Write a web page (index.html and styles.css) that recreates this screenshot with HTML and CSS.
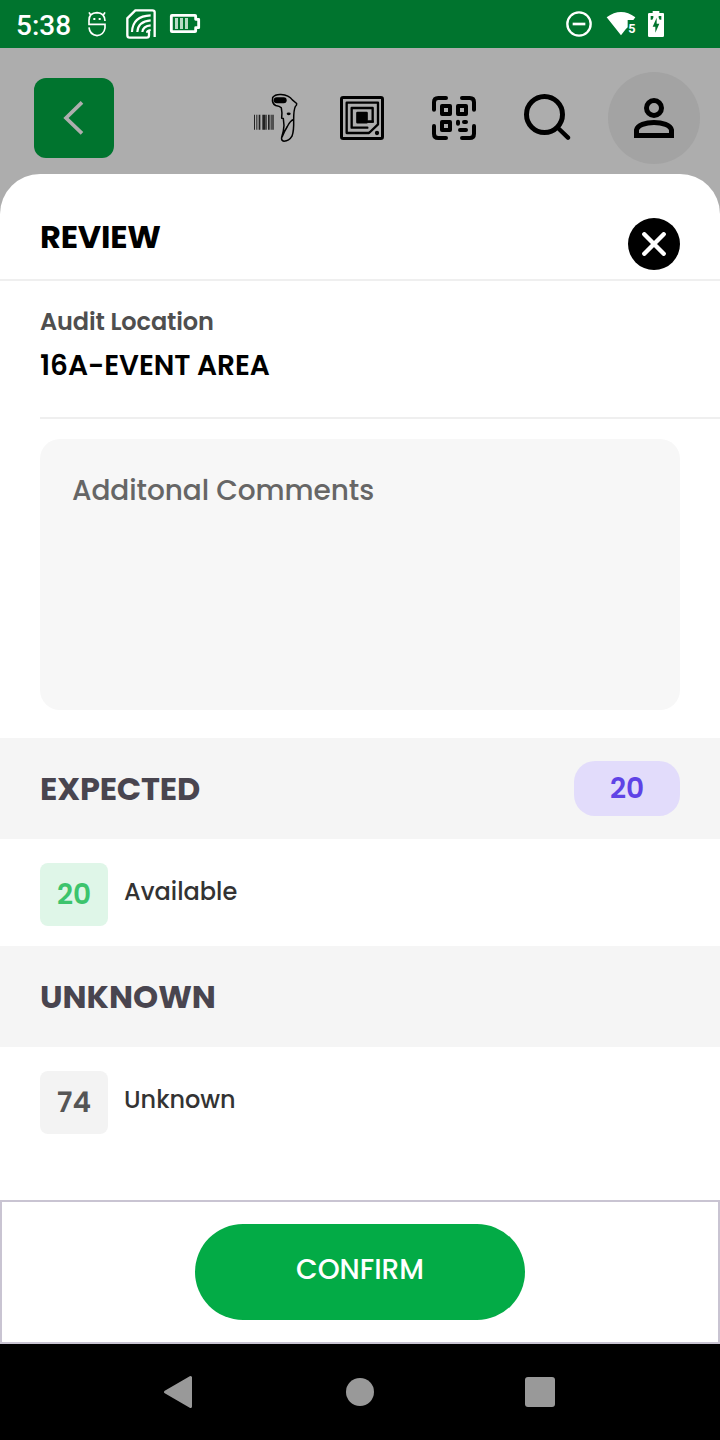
FILE: index.html
```html
<!DOCTYPE html>
<html lang="en">
<head>
<meta charset="utf-8">
<title>Review</title>
<link rel="stylesheet" href="styles.css">
</head>
<body>
<div class="screen">
  <div class="status">
    <span class="time">5:38</span>
    <svg class="st-face" viewBox="258 30 66 84" width="22" height="28" fill="none" stroke="#fff" stroke-width="5">
      <path d="M315 63Q314 39 291 38Q267 39 267 61V73H315V84Q312 104 291 107Q269 104 267 82M272 45L267 37M310 45L315 37"/>
      <path d="M280 57h6M296 57h6" stroke-width="6"/>
    </svg>
    <svg class="st-sim" viewBox="375 24 96 96" width="32" height="32" fill="none" stroke="#fff" stroke-width="7">
      <path d="M464 111V37Q464 31 457 31H406L382 55V106Q382 113 389 113H440Q447 113 447 106V90"/>
      <path d="M396 96Q398 48 452 46M412 96Q414 64 452 61M427 96Q429 78 452 76M441 98Q441 91 452 90" stroke-width="6.500"/>
    </svg>
    <svg class="st-batt" viewBox="507 39 96 63" width="32" height="21">
      <path d="M516 46H585Q587 46 587 48V58H596V83H587V93Q587 95 585 95H516Q514 95 514 93V48Q514 46 516 46Z" fill="none" stroke="#fff" stroke-width="8.500" stroke-linejoin="round"/>
      <path d="M525 54h9v33h-9zM540 54h9v33h-9zM555 54h9v33h-9z" fill="#b9dcc6"/>
    </svg>
    <span class="grow"></span>
    <svg class="st-dnd" viewBox="258 33 78 78" width="26" height="26" fill="none" stroke="#fff"><circle cx="297" cy="72" r="35" stroke-width="7"/><path d="M278 72H316" stroke-width="8"/></svg>
    <svg class="st-wifi" viewBox="378 33 93 75" width="31" height="25"><path d="M380 52Q423 20 466 52L460 60H443V82L437 88L423 106Z" fill="#fff"/><text x="445" y="99" class="wifi-num">5</text></svg>
    <svg class="st-chg" viewBox="504 30 48 84" width="16" height="28"><path d="M518 33H538V39H549Q552 39 552 42V107Q552 111 548 111H508Q504 111 504 107V42Q504 39 508 39H518Z" fill="#fff"/><path d="M530 53L518 80H526V98L538 71H530ZM512 48h8v5l-3 6h-5zM536 48h8v11h-5l-3-6z" fill="#00742e"/></svg>
  </div>

  <div class="toolbar">
    <div class="back"><svg viewBox="190 300 64 108" width="21.330" height="36"><path d="M247 307L199 354L247 400" fill="none" stroke="#aeaeae" stroke-width="11"/></svg></div>
    <span class="grow"></span>
    <svg class="ic-scan" viewBox="36 69.500 144 150" width="48" height="50">
      <path d="M42 135h3v45h-3zM48 135h2v45h-2zM53 135h2v45h-2zM57 135h4v45h-4zM66 135h2v45h-2zM69 135h8v45h-8zM79 135h2v45h-2zM84 135h5v45h-5zM92 135h3v45h-3zM97 135h2v45h-2zM100 135h2v45h-2z" fill="#222"/>
      <path d="M98 83Q105 73 123 74Q147 76 157 90L170 101Q171 106 166 110Q161 120 161 149Q162 184 156 199Q147 214 132 214Q123 213 125 202Q131 186 132 167L130 146L125 145Q127 128 124 114Q119 109 107 107Q95 101 98 83ZM161 149Q151 152 142 170Q132 186 126 202" fill="none" stroke="#000" stroke-width="4.500" stroke-linejoin="round"/>
      <rect x="101" y="82" width="39" height="18" rx="9"/><ellipse cx="146" cy="132" rx="6" ry="4"/>
    </svg>
    <svg class="ic-rfid" viewBox="300 78 132 132" width="44" height="44" fill="none" stroke="#000" stroke-width="7" stroke-linejoin="round" stroke-linecap="round">
      <rect x="304.500" y="82.500" width="123" height="123" rx="5" stroke-width="9"/>
      <path d="M386 189H320V98H414V163L387 189M382 173H335V114H398V155H386" />
      <rect x="352" y="129" width="28" height="28" fill="#000"/><path d="M380 155H398"/><circle cx="411" cy="189" r="3.500" fill="#000" stroke-width="6"/>
    </svg>
    <svg class="ic-qr" viewBox="576 78 132 132" width="44" height="44" fill="none" stroke="#000" stroke-width="12" stroke-linecap="round" stroke-linejoin="round">
      <path d="M582 119V97Q582 84 595 84H618M666 84H689Q702 84 702 97V119M702 168V191Q702 204 689 204H666M618 204H595Q582 204 582 191V168"/>
      <path d="M606 108h24v24h-24zM654 108h24v24h-24zM606 156h24v24h-24z"/>
      <path d="M654 155v6M672 156h6M660 180h18"/>
    </svg>
    <svg class="ic-search" viewBox="129 279 144 144" width="48" height="48" fill="none" stroke="#000" stroke-width="15"><circle cx="193.500" cy="343.500" r="54"/><path d="M234 384L264 413" stroke-linecap="round" stroke-width="13"/></svg>
    <div class="avatar"><svg viewBox="462 294 120 120" width="40" height="40" fill="none" stroke="#000" stroke-width="15"><circle cx="522" cy="324" r="22.500"/><path d="M469.500 406.500V390C475 360 569 360 574.500 390V406.500Z"/></svg></div>
  </div>

  <div class="sheet">
    <div class="head">
      <div class="title t-review">REVIEW</div>
      <div class="close"><svg viewBox="0 0 24 24" width="24" height="24"><path d="M2.300 2.300L21.700 21.700M21.700 2.300L2.300 21.700" stroke="#fff" stroke-width="4.400" stroke-linecap="round"/></svg></div>
    </div>
    <div class="location">
      <div class="label">Audit Location</div>
      <div class="value">16A-EVENT AREA</div>
    </div>
    <div class="comments">Additonal Comments</div>
    <div class="band"><div class="title t-expected">EXPECTED</div><div class="pill">20</div></div>
    <div class="row"><div class="badge ok">20</div><div class="name">Available</div></div>
    <div class="band"><div class="title">UNKNOWN</div></div>
    <div class="row"><div class="badge unk">74</div><div class="name">Unknown</div></div>
    <div class="footer"><div class="confirm">CONFIRM</div></div>
  </div>

  <div class="nav">
    <svg viewBox="0 0 30 34" width="30" height="34"><path d="M2.500 17L27.500 2.500V31.500Z" fill="#999" stroke="#999" stroke-width="3" stroke-linejoin="round"/></svg>
    <span class="home"></span>
    <span class="recent"></span>
  </div>
</div>
</body>
</html>
```
FILE: styles.css
```css
* { box-sizing: border-box; }
body { margin: 0; font-family: Poppins, Inter, sans-serif; }
.screen { width: 720px; height: 1440px; display: flex; flex-direction: column; background: #adadad; overflow: hidden; }
.grow { flex: 1; }
svg { display: block; flex: none; }

.status { height: 48px; flex: none; background: #00742e; display: flex; align-items: center; padding: 0 56px 0 16px; }
.time { font: 500 28px/48px Roboto, sans-serif; color: #fff; width: 70px; padding-top: 3px; white-space: nowrap; }
.st-sim { margin-left: 17px; }
.st-batt { margin-left: 12px; margin-top: -1px; }
.st-wifi { margin-left: 14px; margin-top: -1px; }
.st-chg { margin-left: 11px; }
.wifi-num { font: 700 38px Roboto, sans-serif; fill: #fff; }

.toolbar { height: 126px; flex: none; display: flex; align-items: center; padding: 14px 20px 0 34px; }
.back { width: 80px; height: 80px; border-radius: 12px; background: #00742e; display: flex; align-items: center; justify-content: center; }
.ic-rfid { margin-left: 40px; }
.ic-qr { margin-left: 48px; }
.ic-search { margin-left: 47px; margin-top: -2px; }
.avatar { width: 92px; height: 92px; margin-left: 37px; border-radius: 50%; background: #a3a3a3; display: flex; align-items: center; justify-content: center; }

.sheet { height: 1170px; flex: none; background: #fff; border-radius: 40px 40px 0 0; display: flex; flex-direction: column; }
.head { height: 107px; flex: none; display: flex; justify-content: space-between; padding: 44px 40px 0; border-bottom: 2px solid #efefef; }
.title { font-size: 32px; font-weight: 700; line-height: 40px; white-space: nowrap; color: #49454f; }
.t-review { color: #000; margin-top: -1px; letter-spacing: -0.2px; }
.t-expected { letter-spacing: -0.15px; }
.close { width: 52px; height: 52px; border-radius: 50%; background: #000; display: flex; align-items: center; justify-content: center; }
.location { height: 138px; flex: none; margin-left: 40px; padding-top: 25px; border-bottom: 2px solid #efefef; white-space: nowrap; }
.label { font-size: 24px; font-weight: 600; line-height: 32px; letter-spacing: -0.1px; color: #4f4f4f; }
.value { font-size: 28px; font-weight: 600; line-height: 40px; letter-spacing: -0.05px; margin-top: 8px; color: #000; }
.comments { height: 271px; flex: none; margin: 20px 40px 28px; padding: 33px 32px; border-radius: 20px; background: #f7f7f7; font-size: 28px; font-weight: 500; line-height: 38px; letter-spacing: -0.08px; color: #666; white-space: nowrap; }
.band { height: 101px; flex: none; padding: 0 40px; background: #f5f5f5; display: flex; align-items: center; justify-content: space-between; }
.pill { width: 106px; height: 55px; border-radius: 21px; background: #e2dcfb; color: #5f43e6; font-size: 28px; font-weight: 600; line-height: 55px; text-align: center; }
.row { height: 107px; flex: none; padding: 24px 40px 20px; display: flex; gap: 16px; }
.badge { width: 68px; height: 63px; border-radius: 8px; font-size: 28px; font-weight: 600; line-height: 63px; text-align: center; }
.ok { background: #dff6e8; color: #3dc46d; }
.unk { background: #f3f3f3; color: #555; }
.name { font-size: 24px; font-weight: 500; line-height: 58px; color: #333; white-space: nowrap; }
.footer { height: 144px; margin-top: auto; flex: none; border: 2px solid #c9c4d2; display: flex; align-items: center; justify-content: center; }
.confirm { width: 330px; height: 96px; border-radius: 48px; background: #03ab46; color: #fff; font-size: 28px; font-weight: 500; line-height: 91px; text-align: center; }

.nav { height: 96px; flex: none; background: #000; display: flex; align-items: center; padding-left: 163px; }
.home { width: 28px; height: 28px; border-radius: 50%; background: #999; margin-left: 153px; }
.recent { width: 30px; height: 30px; border-radius: 3px; background: #999; margin-left: 151px; }
```
